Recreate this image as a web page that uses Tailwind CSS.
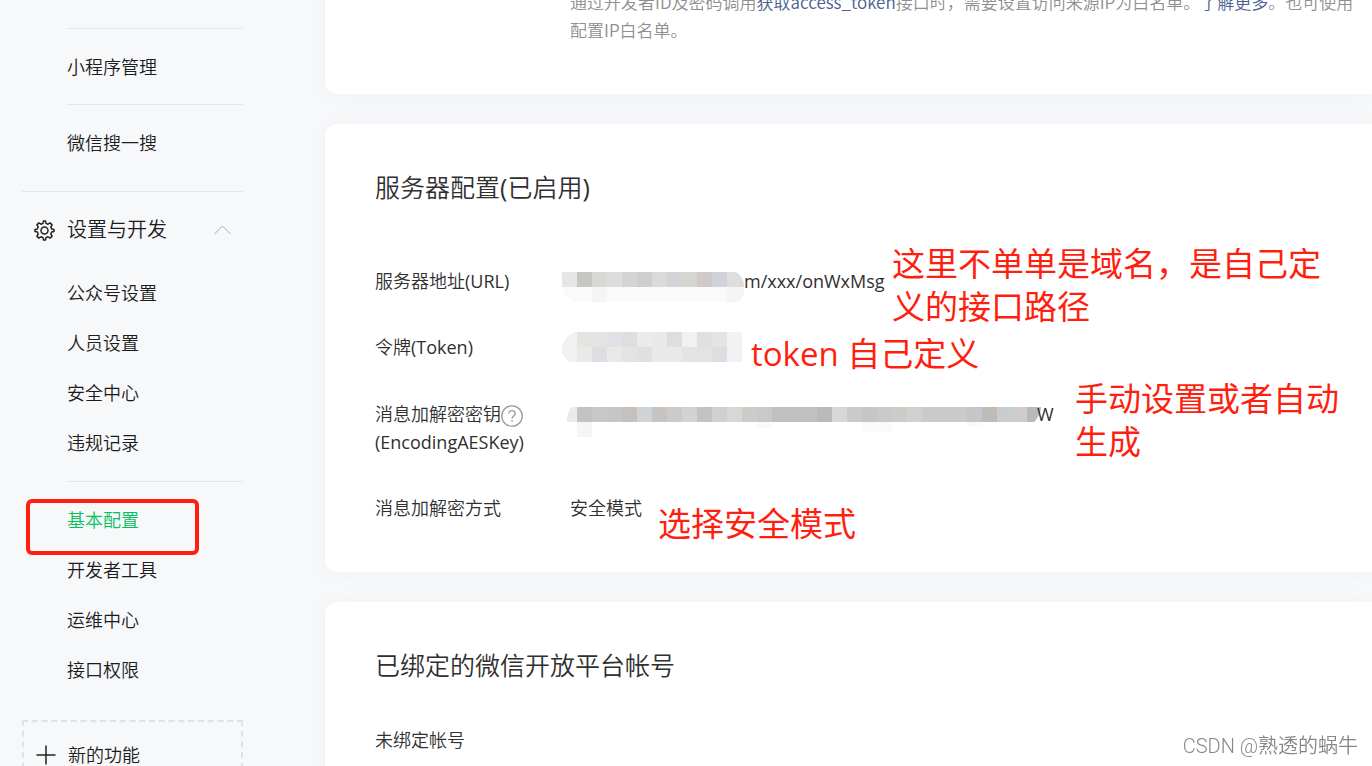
<!DOCTYPE html>
<html lang="zh-CN">
<head>
<meta charset="utf-8">
<meta name="viewport" content="width=device-width, initial-scale=1">
<title>基本配置</title>
<script src="https://cdn.jsdelivr.net/npm/@tailwindcss/browser@4"></script>
</head>
<body class="h-screen overflow-hidden bg-[#f7f8fa] font-['Open_Sans','Noto_Sans_CJK_SC',sans-serif] text-[18px] leading-7 font-[350] text-[#303030]">
<div class="flex h-full">
  <nav aria-label="主菜单" class="flex w-[325px] shrink-0 flex-col pr-[82px] pl-[22px] text-[#1c1c1c]">
    <div class="ml-[45px] mt-7 border-t border-[#e4e5e7]"></div>
    <a href="#" class="ml-[45px] flex h-[75px] shrink-0 items-center">小程序管理</a>
    <div class="ml-[45px] border-t border-[#e4e5e7]"></div>
    <a href="#" class="ml-[45px] mb-[11px] flex h-[75px] shrink-0 items-center">微信搜一搜</a>
    <div class="border-t border-[#e4e5e7]"></div>
    <button type="button" aria-expanded="true" class="flex h-[76px] shrink-0 items-center pr-3 pl-3 text-left text-[20px]">
      <svg class="mr-3 size-[21px] shrink-0" viewBox="0 0 21 21" fill="none" stroke="#222" stroke-width="1.5" stroke-linejoin="round" aria-hidden="true">
        <path d="M9 3.4 9.5 1h2L12 3.4l2 .8L16.100 2.900 18.100 4.900 16.800 7l.8 2 2.400.5v2l-2.400.5-.8 2 1.300 2.100-2 2-2.100-1.300-2 .8L11.500 20h-2L9 17.600l-2-.8-2.100 1.300-2-2L4.200 14l-.8-2L1 11.500v-2L3.400 9l.8-2L2.900 4.900l2-2L7 4.200z"/>
        <circle cx="10.500" cy="10.500" r="3.500"/>
      </svg>
      <span class="flex-1">设置与开发</span>
      <svg class="h-[10px] w-[17px]" viewBox="0 0 17 10" fill="none" stroke="#aaa" aria-hidden="true"><path d="M.5 9 8.500 1l8 8"/></svg>
    </button>
    <div class="ml-[45px] flex flex-col">
      <a href="#" class="flex h-[50px] items-center">公众号设置</a>
      <a href="#" class="flex h-[50px] items-center">人员设置</a>
      <a href="#" class="flex h-[50px] items-center">安全中心</a>
      <a href="#" class="flex h-[50px] items-center">违规记录</a>
      <div class="mt-[13px] mb-[13px] border-t border-[#e4e5e7]"></div>
      <a href="#" aria-current="page" class="relative flex h-[50px] items-center text-[#07c160]">基本配置
        <span class="absolute top-1 -left-[41px] h-14 w-[173px] rounded-md border-4 border-[#ff1f10]"></span>
      </a>
      <a href="#" class="flex h-[50px] items-center">开发者工具</a>
      <a href="#" class="flex h-[50px] items-center">运维中心</a>
      <a href="#" class="flex h-[50px] items-center">接口权限</a>
    </div>
    <button type="button" class="mt-[25px] flex h-[70px] shrink-0 items-center border-2 border-dashed border-[#e1e2e4] pl-3 text-left">
      <svg class="mr-3 size-5" viewBox="0 0 20 20" stroke="#222" stroke-width="1.500" aria-hidden="true"><path d="M10 .5v19M.5 10h19"/></svg>
      新的功能
    </button>
  </nav>

  <main class="flex min-w-0 flex-1 flex-col gap-[30px]">
    <section class="-mt-3 shrink-0 rounded-l-xl bg-white pb-[50px] pl-[245px] text-[#8f8f8f] shadow-[0_1px_15px_#e4e8eb66]">
      <p class="font-['Noto_Sans_CJK_SC',sans-serif] text-[17px] leading-7 whitespace-nowrap">通过开发者ID及密码调用<a href="#" class="text-[#4b608f]">获取access_token</a>接口时，需要设置访问来源IP为白名单。<a href="#" class="text-[#4b608f]">了解更多</a>。也可使用<br>配置IP白名单。</p>
    </section>

    <section class="relative shrink-0 rounded-l-xl bg-white px-[50px] pt-[45px] pb-[50px] shadow-[0_1px_15px_#e4e8eb66]">
      <h2 class="text-[25px] leading-9">服务器配置<span class="font-normal">(</span>已启用<span class="font-normal">)</span></h2>
      <dl class="mt-[62px] grid grid-cols-[187px_1fr]">
        <dt>服务器地址<span class="font-normal">(URL)</span></dt>
        <dd class="flex h-[66px] items-start">
          <svg class="mt-[5px] h-[30px] w-[182px] shrink-0" viewBox="0 0 182 30" role="img" aria-label="已打码">
            <clipPath id="m1"><path d="M0 0h174q7 4 8 13v8q-2 6-5 9H14Q3 28 0 15z"/></clipPath>
            <g clip-path="url(#m1)"><path fill="#fafafa" d="M0 15h182v15H0z"/><path fill="#f5f5f5" d="M30 15h15v15H30zM165 15h17v15h-17z"/>
            <path fill="#e6e6e4" d="M0 0h15v15H0z"/><path fill="#c6c6c5" d="M15 0h15v15H15z"/><path fill="#d8d8d4" d="M30 0h15v15H30z"/><path fill="#dddddf" d="M45 0h15v15H45z"/><path fill="#d4d4d5" d="M60 0h15v15H60z"/><path fill="#cececf" d="M75 0h15v15H75z"/><path fill="#dadadb" d="M90 0h15v15H90z"/><path fill="#d2d4d7" d="M105 0h15v15h-15z"/><path fill="#d5d6d2" d="M120 0h15v15h-15z"/><path fill="#cfc9cb" d="M135 0h15v15h-15z"/><path fill="#d0d4da" d="M150 0h15v15h-15z"/><path fill="#dededf" d="M165 0h17v15h-17z"/></g>
          </svg>
          <span class="font-normal">m/xxx/onWxMsg</span>
        </dd>
        <dt>令牌<span class="font-normal">(Token)</span></dt>
        <dd class="-mt-px h-[68px]">
          <svg class="h-[30px] w-[180px]" viewBox="0 0 180 30" role="img" aria-label="已打码">
            <clipPath id="m2"><path d="M14 0h166v30H8Q0 25 0 17q2-13 14-17z"/></clipPath>
            <g clip-path="url(#m2)"><path fill="#e9e9e8" d="M0 0h180v30H0z"/><path fill="#f1f1f1" d="M0 0h15v30H0zM120 0h15v15h-15z"/><path fill="#e4e4e3" d="M15 0h30v15H15zM150 0h15v15h-15z"/><path fill="#e0e1e6" d="M45 0h15v15H45z"/><path fill="#dededd" d="M60 0h15v15H60z"/><path fill="#e9ecea" d="M75 0h15v15H75z"/><path fill="#e0e0e0" d="M75 15h15v15H75zM135 0h15v15h-15z"/><path fill="#dcdee1" d="M30 15h15v15H30zM105 0h15v15h-15zM150 15h15v15h-15z"/><path fill="#e3e3e4" d="M60 15h15v15H60zM120 15h30v15h-30z"/><path fill="#f0f2f4" d="M165 0h15v30h-15z"/></g>
          </svg>
        </dd>
        <dt>消息加解密密钥<button type="button" aria-label="帮助" class="inline-block align-middle"><svg class="size-[22px]" viewBox="0 0 22 22" fill="none" stroke="#999" stroke-width="1.300" aria-hidden="true"><circle cx="11" cy="11" r="10.200"/><path d="M7.800 8.800q0-3.200 3.200-3.200t3.200 3q0 1.500-1.600 2.500T11 13.700"/><path d="M11 15.200v1.600" stroke-width="1.600"/></svg></button><br><span class="font-normal">(EncodingAESKey)</span></dt>
        <dd class="flex h-[94px] items-start">
          <svg class="mt-[7px] -mr-1 ml-[5px] h-[30px] w-[474px] shrink-0" viewBox="0 0 474 30" role="img" aria-label="已打码">
            <path fill="#f5f5f5" d="M10 15h15v15H10z"/><path fill="#fafafa" d="M190 15h15v6h-15zM295 15h30v10h-30zM400 15h15v5h-15z"/>
            <clipPath id="m3"><path d="M5 0h469q-1 9-7 15H0Q1 4 5 0z"/></clipPath>
            <g clip-path="url(#m3)"><path fill="#cacaca" d="M0 0h474v15H0z"/><path fill="#ebebeb" d="M0 0h10v15H0z"/><path fill="#c3c3c4" d="M10 0h15v15H10z"/><path fill="#c5c8c7" d="M25 0h15v15H25z"/><path fill="#c4c7ca" d="M40 0h15v15H40z"/><path fill="#c7c1bd" d="M55 0h15v15H55z"/><path fill="#ced4d8" d="M70 0h15v15H70z"/><path fill="#c7c4c2" d="M85 0h15v15H85z"/><path fill="#cccbc8" d="M100 0h15v15h-15z"/><path fill="#d0d4d5" d="M115 0h15v15h-15z"/><path fill="#c3c3c3" d="M130 0h15v15h-15z"/><path fill="#d0d0d0" d="M145 0h15v15h-15z"/><path fill="#d5d8d6" d="M160 0h15v15h-15z"/><path fill="#cfcbc7" d="M175 0h15v15h-15zM325 0h15v15h-15z"/><path fill="#c7cac8" d="M190 0h15v15h-15z"/><path fill="#c2c0bf" d="M205 0h45v15h-45z"/><path fill="#bcb9bc" d="M250 0h15v15h-15z"/><path fill="#d7d7d7" d="M265 0h15v15h-15z"/><path fill="#c4c6c9" d="M295 0h15v15h-15zM400 0h15v15h-15z"/><path fill="#d0d2d1" d="M340 0h15v15h-15z"/><path fill="#c0bbb7" d="M415 0h15v15h-15z"/><path fill="#c8cdd2" d="M430 0h15v15h-15z"/><path fill="#d1ccc9" d="M445 0h15v15h-15z"/><path fill="#b7b9bb" d="M460 0h14v15h-14z"/></g>
          </svg>
          <span class="font-normal">W</span>
        </dd>
        <dt>消息加解密方式</dt>
        <dd class="pl-2">安全模式</dd>
      </dl>
      <div class="absolute inset-0 text-[33px] leading-[43px] font-normal text-[#ff1f10]">
        <p class="absolute top-[118px] left-[567px] w-[440px]">这里不单单是域名，是自己定义的接口路径</p>
        <p class="absolute top-[208px] left-[426px]">token 自己定义</p>
        <p class="absolute top-[253px] left-[750px] w-[270px]">手动设置或者自动生成</p>
        <p class="absolute top-[378px] left-[333px]">选择安全模式</p>
      </div>
    </section>

    <section class="shrink-0 rounded-l-xl bg-white px-[50px] pt-[45px] pb-[50px] shadow-[0_1px_15px_#e4e8eb66]">
      <h2 class="text-[25px] leading-9">已绑定的微信开放平台帐号</h2>
      <p class="mt-[43px]">未绑定帐号</p>
    </section>
  </main>
</div>
<div class="fixed right-3.5 bottom-1.5 font-['Roboto','Noto_Sans_CJK_SC',sans-serif] text-[20px] leading-7 text-[#888]">CSDN @熟透的蜗牛</div>
</body>
</html>
